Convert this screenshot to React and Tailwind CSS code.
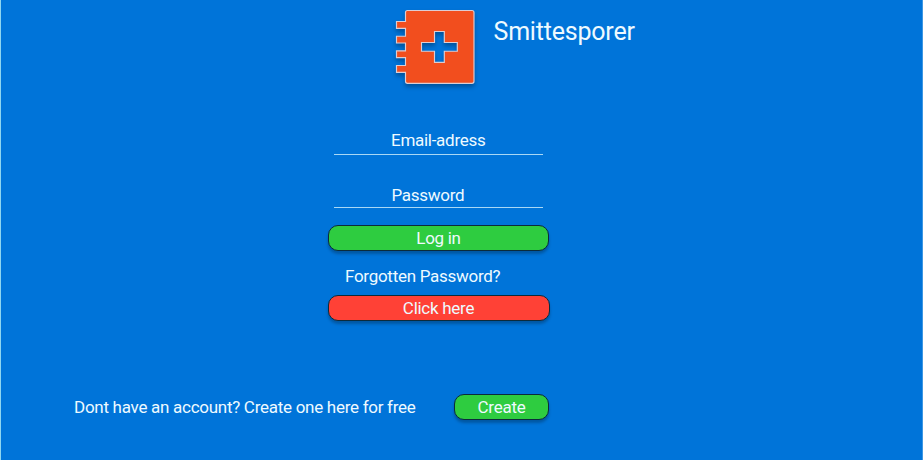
function Logo() {
  return (
    <svg className="block h-[85px] w-[90px] overflow-visible drop-shadow-[0_3px_2px_rgba(0,0,0,0.28)]" viewBox="390 5 90 85">
      <path
        fill="#F24E1E"
        stroke="#DCCDD4"
        strokeWidth="1.15"
        fillRule="evenodd"
        d="M407.5 10.5H472Q474 10.5 474 12.5V81.3Q474 83.3 472 83.3H407.5Q405.5 83.3 405.5 81.3V72.3H396.5V65.5H405.5V57.6H396.5V50.8H405.5V43H396.5V36.2H405.5V28.3H396.5V21.5H405.5V12.5Q405.5 10.5 407.5 10.5ZM434.5 31.5V42.5H421.5V51.2H434.5V62.3H444.3V51.2H457.3V42.5H444.3V31.5Z"
      />
    </svg>
  );
}

function Button({ children, className }) {
  return (
    <button
      className={`flex items-center justify-center rounded-[10px] border border-[#0b2b3c] shadow-[0_3px_3px_rgba(0,0,0,0.25)] ${className}`}
    >
      {children}
    </button>
  );
}

export default function App() {
  return (
    <main className="h-[460px] w-[923px] overflow-hidden border-l border-r border-l-[#8fd6f0] border-r-[#3d97e3] bg-[#0074D9] font-[Roboto,sans-serif] text-[17px] leading-5 tracking-[-0.28px] text-[#eefaff]">
      <header className="flex h-[90px] pl-[389px] pt-[5px]">
        <Logo />
        <h1 className="ml-[13.5px] mt-[11px] whitespace-nowrap text-[25px] leading-8 tracking-[-0.2px]">Smittesporer</h1>
      </header>
      <form className="flex flex-col" onSubmit={(e) => e.preventDefault()}>
        <label className="ml-[333px] mt-[40px] h-[25px] w-[209px] border-b border-[#a9d8f5] pl-[57px]">Email-adress</label>
        <label className="ml-[333px] mt-[30px] h-[23px] w-[209px] border-b border-[#a9d8f5] pl-[57.5px]">Password</label>
        <Button className="ml-[327px] mt-[17px] h-[26px] w-[221px] bg-[#2ECC40]">Log in</Button>
        <p className="ml-[344px] mt-[15px]">Forgotten Password?</p>
        <Button className="ml-[327px] mt-[9px] h-[26px] w-[222px] bg-[#FF4136] pr-px">Click here</Button>
      </form>
      <footer className="mt-[73px] flex items-center pl-[73px]">
        <p className="w-[380px] whitespace-nowrap">Dont have an account? Create one here for free</p>
        <Button className="h-[26px] w-[95px] bg-[#2ECC40]">Create</Button>
      </footer>
    </main>
  );
}
